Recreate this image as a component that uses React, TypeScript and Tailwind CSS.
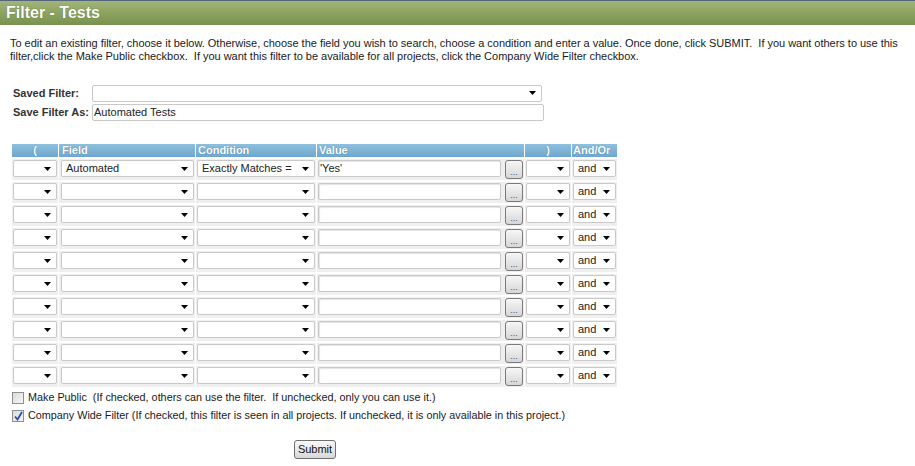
import React from "react";

function Arrow() {
  return (
    <svg className="absolute right-[5px] top-1/2 -translate-y-1/2" width="7" height="4" viewBox="0 0 7 4">
      <polygon points="0,0 7,0 3.5,4" fill="#000" />
    </svg>
  );
}

function Sel({ text, className = "" }: { text?: string; className?: string }) {
  return (
    <div
      className={
        "relative h-[17px] bg-white border border-[#c9c9c9] rounded-[2px] flex items-center pl-[4px] text-[11px] text-[#222] " +
        className
      }
    >
      {text}
      <Arrow />
    </div>
  );
}

function Dots() {
  return (
    <div className="w-[18px] h-[19px] rounded-[3px] border border-[#7b7b7b] bg-gradient-to-b from-[#f7f7f7] to-[#d6d6d6] flex items-end justify-center text-[9px] leading-[12px] text-[#555]">
      ...
    </div>
  );
}

type Row = { field?: string; cond?: string; value?: string };

export default function App() {
  const rows: Row[] = [
    { field: "Automated", cond: "Exactly Matches =", value: "'Yes'" },
    {},
    {},
    {},
    {},
    {},
    {},
    {},
    {},
    {},
  ];
  const cell = "bg-[#efefef] h-[21px] flex items-start pt-[1px] px-[1px]";
  const head =
    "h-[13px] bg-gradient-to-b from-[#8ec0de] to-[#6ea7cc] text-white font-bold text-[11px] leading-[13px] [text-shadow:0_0_1px_#3a6f96]";
  return (
    <div className="w-[915px] h-[466px] bg-white overflow-hidden" style={{ fontFamily: '"Liberation Sans", Arial, sans-serif' }}>
      <div className="h-[25px] border-t border-[#53667a] bg-gradient-to-b from-[#a2b47c] via-[#8ca35f] to-[#7a924f] flex items-center pl-[6px]">
        <span className="text-white font-bold text-[16px] leading-[20px] [text-shadow:0_0_1px_#4b5e30]">Filter - Tests</span>
      </div>

      <div className="pl-[10px] pt-[12px] text-[11px] tracking-[-0.02px] leading-[13px] text-[#1a1a1a] whitespace-nowrap">
        To edit an existing filter, choose it below. Otherwise, choose the field you wish to search, choose a condition and enter a value. Once done, click SUBMIT.{"\u00a0"} If you want others to use this
        <br />
        filter,click the Make Public checkbox.{"\u00a0"} If you want this filter to be available for all projects, click the Company Wide Filter checkbox.
      </div>

      <div className="pl-[13px] pt-[21px] text-[11px]">
        <div className="flex items-center h-[18px]">
          <span className="w-[79px] font-bold text-[#333]">Saved Filter:</span>
          <Sel className="w-[450px]" />
        </div>
        <div className="flex items-center h-[17px] mt-[2px]">
          <span className="w-[79px] font-bold text-[#333]">Save Filter As:</span>
          <div className="w-[452px] h-[17px] bg-white border border-[#c9c9c9] rounded-[2px] flex items-center pl-[1px] text-[11px] text-[#222]">
            Automated Tests
          </div>
        </div>
      </div>

      <div className="ml-[12px] mt-[23px] grid grid-cols-[46px_136px_120px_207px_46px_45px] gap-x-[1px] gap-y-[2px] w-[606px]">
        <div className={head + " text-center"}>(</div>
        <div className={head + " pl-[3px]"}>Field</div>
        <div className={head + " pl-[2px]"}>Condition</div>
        <div className={head + " pl-[2px]"}>Value</div>
        <div className={head + " text-center"}>)</div>
        <div className={head + " pl-[1px]"}>And/Or</div>
        {rows.map((r, i) => (
          <React.Fragment key={i}>
            <div className={cell}>
              <Sel className="w-full" />
            </div>
            <div className={cell + " pl-[2px]"}>
              <Sel className="w-full pl-[4px]" text={r.field} />
            </div>
            <div className={cell}>
              <Sel className="w-full" text={r.cond} />
            </div>
            <div className={cell + " gap-[4px]"}>
              <div className="w-[183px] h-[17px] bg-white border border-[#c9c9c9] rounded-[2px] flex items-center pl-[1px] text-[11px] text-[#222] shadow-[inset_1px_1px_1px_#e4e4e4]">
                {r.value}
              </div>
              <Dots />
            </div>
            <div className={cell}>
              <Sel className="w-full" />
            </div>
            <div className={cell}>
              <Sel className="w-full" text="and" />
            </div>
          </React.Fragment>
        ))}
      </div>

      <div className="pl-[12px] pt-[2px] text-[10.8px] text-[#1a1a1a]">
        <div className="flex items-center h-[17px] gap-[4px]">
          <span className="w-[12px] h-[12px] border border-[#8f8f8f] bg-gradient-to-br from-[#dcdcdc] to-[#f6f6f6]" />
          <span>Make Public{"\u00a0"} (If checked, others can use the filter.{"\u00a0"} If unchecked, only you can use it.)</span>
        </div>
        <div className="flex items-center h-[17px] gap-[4px] mt-[1px]">
          <span className="relative w-[12px] h-[12px] border border-[#8f8f8f] bg-gradient-to-br from-[#dcdcdc] to-[#f6f6f6]">
            <svg className="absolute left-[1px] top-[0px]" width="9" height="10" viewBox="0 0 9 10">
              <path d="M1 5.5 L3.5 8.5 L8 1" stroke="#2a4fb4" strokeWidth="1.8" fill="none" />
            </svg>
          </span>
          <span>Company Wide Filter (If checked, this filter is seen in all projects. If unchecked, it is only available in this project.)</span>
        </div>
      </div>

      <div className="pl-[294px] pt-[16px]">
        <div className="w-[42px] h-[19px] rounded-[3px] border border-[#6f6f6f] bg-gradient-to-b from-[#f8f8f8] to-[#d8d8d8] flex items-center justify-center text-[11px] text-[#111]">
          Submit
        </div>
      </div>
    </div>
  );
}
